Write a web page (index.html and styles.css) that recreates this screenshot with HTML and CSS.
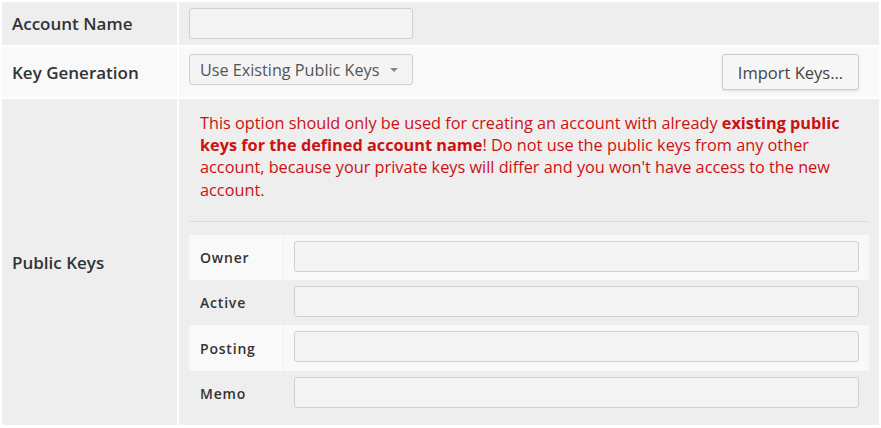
FILE: index.html
```html
<!DOCTYPE html>
<html>
<head>
<meta charset="utf-8">
<link rel="stylesheet" href="styles.css">
</head>
<body>
<div class="form">
  <div class="label row1">Account Name</div>
  <div class="cell row1"><div class="input short"></div></div>

  <div class="label row2">Key Generation</div>
  <div class="cell row2 split">
    <div class="select">Use Existing Public Keys <span class="caret"></span></div>
    <div class="button">Import Keys...</div>
  </div>

  <div class="label row3">Public Keys</div>
  <div class="cell row3 keys">
    <p class="warning">This option should only be used for creating an account with already <b>existing public keys for the defined account name</b>! Do not use the public keys from any other account, because your private keys will differ and you won't have access to the new account.</p>
    <div class="rule"></div>
    <div class="inner">
      <div class="klabel light">Owner</div><div class="kcell light"><div class="input"></div></div>
      <div class="klabel">Active</div><div class="kcell"><div class="input"></div></div>
      <div class="klabel light">Posting</div><div class="kcell light"><div class="input"></div></div>
      <div class="klabel">Memo</div><div class="kcell"><div class="input"></div></div>
    </div>
  </div>
</div>
</body>
</html>
```
FILE: styles.css
```css
html, body {
  margin: 0;
  padding: 0;
  background: #ffffff;
}
body {
  font-family: "Open Sans", "Liberation Sans", sans-serif;
  color: #333;
}
.form {
  margin: 2px 2px 0 2px;
  display: grid;
  grid-template-columns: 175px 1fr;
  grid-template-rows: 43px 50px 326px;
  column-gap: 2px;
  row-gap: 2px;
}
.label {
  display: flex;
  align-items: center;
  padding-left: 10px;
  font-size: 17px;
  font-weight: 600;
  color: #333;
}
.row1 { background: #eeeeee; }
.row2 { background: #f9f9f9; }
.row3 { background: #eeeeee; }
.cell {
  padding: 6px 10px;
  box-sizing: border-box;
}
.split {
  display: flex;
  justify-content: space-between;
  align-items: flex-start;
  padding-top: 7px;
  padding-right: 20px;
}
.input {
  height: 31px;
  box-sizing: border-box;
  border: 1px solid #cfcfcf;
  border-radius: 3px;
  background: #f4f4f4;
}
.short { width: 224px; }
.select {
  width: 224px;
  height: 31px;
  box-sizing: border-box;
  border: 1px solid #cfcfcf;
  border-radius: 3px;
  background: #f4f4f4;
  font-size: 16.2px;
  color: #555;
  padding: 0 10px;
  display: flex;
  align-items: center;
  gap: 9px;
  white-space: nowrap;
}
.caret {
  width: 0;
  height: 0;
  border-left: 4px solid transparent;
  border-right: 4px solid transparent;
  border-top: 4px solid #888;
  margin-left: 2px;
}
.button {
  width: 137px;
  height: 36px;
  box-sizing: border-box;
  border: 1px solid #cccccc;
  border-radius: 3px;
  background: #f6f6f6;
  box-shadow: 0 1px 2px rgba(0,0,0,0.12);
  font-size: 16.5px;
  color: #444;
  display: flex;
  align-items: center;
  justify-content: center;
}
.keys {
  padding: 10px 10px 8px 10px;
  display: flex;
  flex-direction: column;
}
.warning {
  margin: 3px 0 0 0;
  padding: 0 11px;
  font-size: 16.3px;
  line-height: 22.2px;
  color: #cc1111;
}
.warning b {
  font-weight: 700;
}
.rule {
  height: 1px;
  background: #dcdcdc;
  margin-top: 20px;
}
.inner {
  margin-top: 13px;
  display: grid;
  grid-template-columns: 94px 1fr;
  grid-auto-rows: 45.3px;
  column-gap: 1px;
}
.klabel {
  display: flex;
  align-items: center;
  padding-left: 11px;
  font-size: 14px;
  font-weight: 600;
  letter-spacing: 0.8px;
  color: #333;
}
.kcell {
  padding: 6px 10px 0 10px;
}
.light { background: #f9f9f9; }
```
